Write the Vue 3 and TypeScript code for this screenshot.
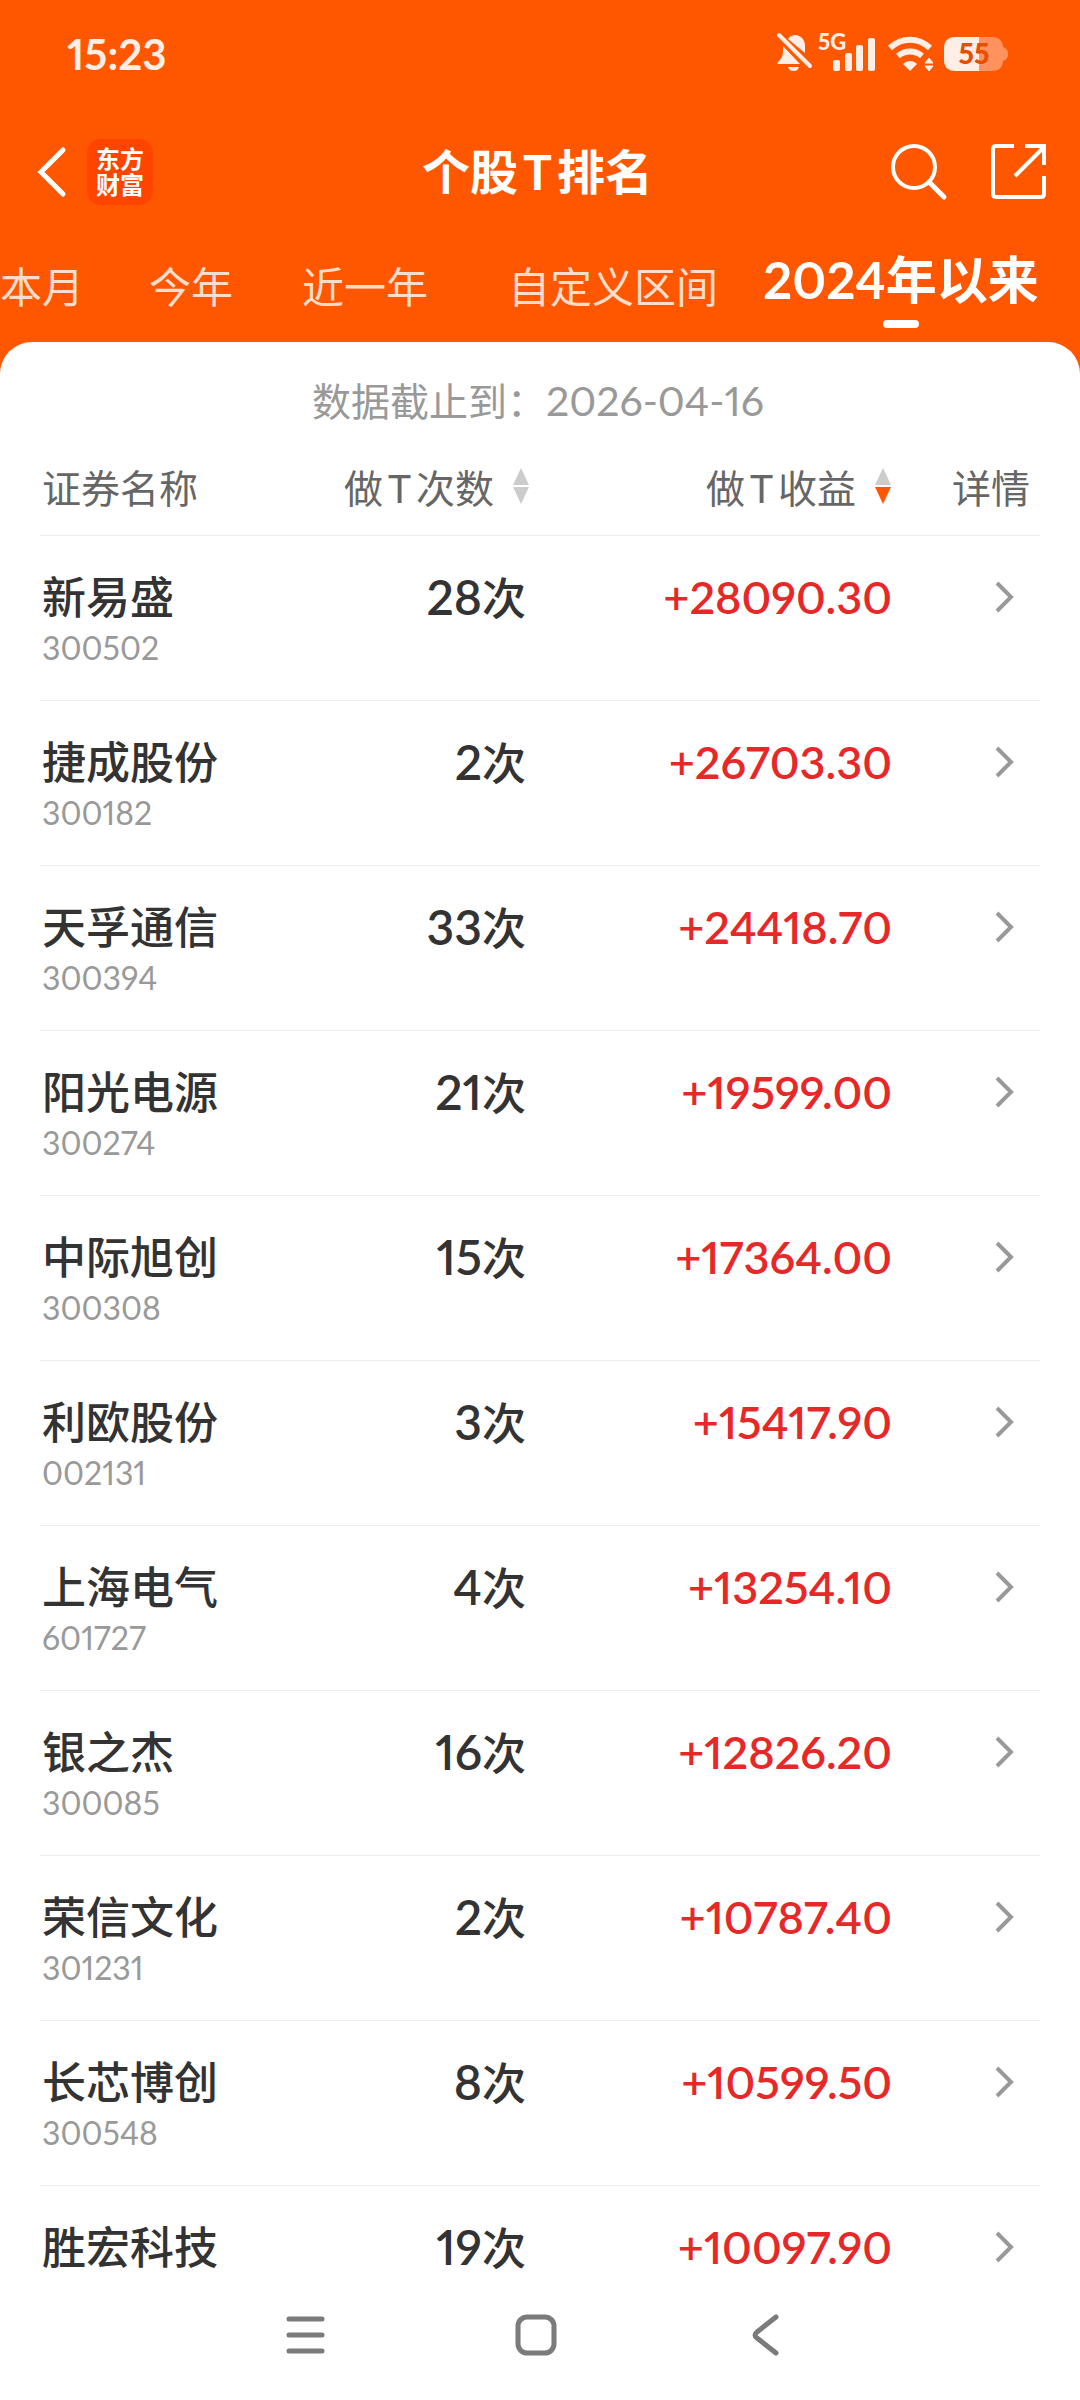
<script setup lang="ts">
import { ref } from 'vue'

interface Stock {
  name: string
  code: string
  count: number
  profit: string
}

const tabs: string[] = ['本月', '今年', '近一年', '自定义区间', '2024年以来']
const activeTab = ref<string>('2024年以来')

const stocks: Stock[] = [
  { name: '新易盛', code: '300502', count: 28, profit: '+28090.30' },
  { name: '捷成股份', code: '300182', count: 2, profit: '+26703.30' },
  { name: '天孚通信', code: '300394', count: 33, profit: '+24418.70' },
  { name: '阳光电源', code: '300274', count: 21, profit: '+19599.00' },
  { name: '中际旭创', code: '300308', count: 15, profit: '+17364.00' },
  { name: '利欧股份', code: '002131', count: 3, profit: '+15417.90' },
  { name: '上海电气', code: '601727', count: 4, profit: '+13254.10' },
  { name: '银之杰', code: '300085', count: 16, profit: '+12826.20' },
  { name: '荣信文化', code: '301231', count: 2, profit: '+10787.40' },
  { name: '长芯博创', code: '300548', count: 8, profit: '+10599.50' },
  { name: '胜宏科技', code: '', count: 19, profit: '+10097.90' },
]
</script>

<template>
  <div class="app">
    <header class="top">
      <div class="status">
        <time class="clock">15:23</time>
        <div class="indicators">
          <svg class="bell" width="36" height="40" viewBox="0 0 36 40" aria-hidden="true">
            <path d="M11 7C13 4 16 3 18 3C24 3 28 8 28 14V21Z" fill="currentColor" />
            <path d="M6 14L23 32H1C0 32 0 31 1 30C4 27 6 24 6 20Z" fill="currentColor" />
            <path d="M11 35H22C21 38 19 39 17 39C14 39 12 38 11 35Z" fill="currentColor" />
            <path d="M2 3L33 34" stroke="currentColor" stroke-width="4" stroke-linecap="round" />
          </svg>
          <svg class="signal" width="58" height="40" viewBox="0 0 58 40" aria-hidden="true">
            <text x="0" y="18" class="net">5G</text>
            <rect x="15" y="28" width="7" height="11" rx="2" fill="currentColor" />
            <rect x="27" y="21" width="7" height="18" rx="2" fill="currentColor" />
            <rect x="38" y="13" width="7" height="26" rx="2" fill="currentColor" />
            <rect x="50" y="6" width="7" height="33" rx="2" fill="currentColor" />
          </svg>
          <svg class="wifi" width="46" height="40" viewBox="0 0 46 40" aria-hidden="true">
            <path d="M2 16C14 5 30 5 42 16" fill="none" stroke="currentColor" stroke-width="6" />
            <path d="M10 24C17 18 27 18 34 24" fill="none" stroke="currentColor" stroke-width="6" />
            <path d="M15 32C19 28 25 28 29 32L22 39Z" fill="currentColor" />
            <path d="M37 31H45L41 26ZM37 34H45L41 39Z" fill="currentColor" stroke="currentColor" />
          </svg>
          <svg class="battery" width="64" height="34" viewBox="0 0 64 34" aria-hidden="true">
            <path d="M35 0H48C55 0 59 4 59 10C62 11 64 13 64 17C64 21 62 23 59 24C59 30 55 34 48 34H35Z" fill="#ff925d" />
            <path d="M35 0H11C4 0 0 4 0 11V23C0 30 4 34 11 34H35Z" fill="currentColor" />
            <text x="30" y="27" class="level">55</text>
          </svg>
        </div>
      </div>

      <div class="titlebar">
        <div class="side">
          <button class="icon-btn" type="button" aria-label="返回">
            <svg width="28" height="50" viewBox="0 0 28 50">
              <path d="M25 3L3 25L25 47" fill="none" stroke="#fff" stroke-width="5" stroke-linecap="round" />
            </svg>
          </button>
          <div class="logo"><span>东方</span><span>财富</span></div>
        </div>
        <h1>个股<span class="latin">T</span>排名</h1>
        <div class="side end">
          <button class="icon-btn" type="button" aria-label="搜索">
            <svg width="56" height="56" viewBox="0 0 56 56" fill="none" stroke="#fff" stroke-width="4">
              <circle cx="23" cy="23" r="21" />
              <path d="M38 38L53 53" stroke-width="5" stroke-linecap="round" />
            </svg>
          </button>
          <button class="icon-btn" type="button" aria-label="分享">
            <svg width="56" height="56" viewBox="0 0 56 56" fill="none" stroke="#fff" stroke-width="4">
              <path d="M23 2H5Q2 2 2 5V50Q2 53 5 53H50Q53 53 53 50V32" />
              <path d="M34 2H53V21" />
              <path d="M52 4L24 32" />
            </svg>
          </button>
        </div>
      </div>

      <nav class="tabs">
        <button
          v-for="tab in tabs"
          :key="tab"
          type="button"
          class="tab"
          :class="{ active: tab === activeTab }"
          @click="activeTab = tab"
        >{{ tab }}</button>
      </nav>
    </header>

    <main class="panel">
      <p class="asof">数据截止到：<span>2026-04-16</span></p>
      <table>
        <colgroup>
          <col class="c-name" />
          <col class="c-count" />
          <col class="c-profit" />
          <col class="c-detail" />
        </colgroup>
        <thead>
          <tr>
            <th scope="col">证券名称</th>
            <th scope="col" class="right">
              <button type="button" class="sort">
                <span>做<span class="latin">T</span>次数</span>
                <svg width="18" height="36" viewBox="0 0 18 36" aria-hidden="true">
                  <path d="M9 0L17 17H1Z" fill="#ccc" />
                  <path d="M9 36L17 19H1Z" fill="#ccc" />
                </svg>
              </button>
            </th>
            <th scope="col" class="right" aria-sort="descending">
              <button type="button" class="sort">
                <span>做<span class="latin">T</span>收益</span>
                <svg width="18" height="36" viewBox="0 0 18 36" aria-hidden="true">
                  <path d="M9 0L17 17H1Z" fill="#ccc" />
                  <path d="M9 36L17 19H1Z" fill="#ff5700" />
                </svg>
              </button>
            </th>
            <th scope="col" class="right detail-head">详情</th>
          </tr>
        </thead>
        <tbody>
          <tr v-for="s in stocks" :key="s.name">
            <td>
              <div class="name">{{ s.name }}</div>
              <div class="code">{{ s.code }}</div>
            </td>
            <td class="right count"><span>{{ s.count }}</span>次</td>
            <td class="right profit">{{ s.profit }}</td>
            <td class="right detail">
              <a href="#" :aria-label="s.name + '详情'">
                <svg width="20" height="32" viewBox="0 0 20 32">
                  <path d="M2 2L16 16L2 30" fill="none" stroke="#999" stroke-width="4" />
                </svg>
              </a>
            </td>
          </tr>
        </tbody>
      </table>
    </main>

    <nav class="sysnav">
      <button class="icon-btn" type="button" aria-label="最近任务">
        <svg width="42" height="42" viewBox="0 0 42 42">
          <path d="M4 5H37M4 21H37M4 37H37" stroke="#7b7b7b" stroke-width="5" stroke-linecap="round" />
        </svg>
      </button>
      <button class="icon-btn" type="button" aria-label="主屏幕">
        <svg width="42" height="42" viewBox="0 0 42 42">
          <rect x="3" y="3" width="36" height="36" rx="9" fill="none" stroke="#7b7b7b" stroke-width="5" />
        </svg>
      </button>
      <button class="icon-btn" type="button" aria-label="返回上一页">
        <svg width="42" height="42" viewBox="0 0 42 42">
          <path d="M31 3L12 18Q8 21 12 24L31 39" fill="none" stroke="#7b7b7b" stroke-width="5" stroke-linecap="round" />
        </svg>
      </button>
    </nav>
  </div>
</template>

<style>
body {
  margin: 0;
  background: #fff;
}
</style>

<style scoped>
.app {
  display: flex;
  flex-direction: column;
  height: 100vh;
  background: #ff5700;
  color: #333;
  font-family: Lato, "Noto Sans CJK SC", sans-serif;
  font-variant-numeric: proportional-nums;
}
button {
  margin: 0;
  padding: 0;
  border: 0;
  background: none;
  color: inherit;
  font: inherit;
  font-variant-numeric: inherit;
  cursor: pointer;
}
svg {
  display: block;
  overflow: visible;
}
.status {
  display: flex;
  align-items: center;
  justify-content: space-between;
  height: 108px;
  padding: 0 72px 0 67px;
  color: #ffeee6;
}
.clock {
  font-size: 42px;
  font-weight: 700;
}
.indicators {
  display: flex;
  align-items: center;
}
.signal {
  margin-left: 5px;
}
.wifi {
  margin-left: 12px;
}
.battery {
  margin-left: 10px;
}
.bell,
.signal,
.wifi {
  margin-bottom: 4px;
}
.net {
  fill: currentColor;
  font-size: 22px;
  font-weight: 900;
}
.level {
  fill: #e64e00;
  font-size: 28px;
  font-weight: 900;
  text-anchor: middle;
}
.titlebar {
  display: flex;
  align-items: center;
  justify-content: space-between;
  height: 128px;
  padding: 0 33px 0 38px;
}
.side {
  display: flex;
  align-items: center;
  gap: 21px;
  flex: 1;
}
.side.end {
  justify-content: flex-end;
  gap: 44px;
}
.logo {
  display: flex;
  flex-direction: column;
  align-items: center;
  justify-content: center;
  width: 66px;
  height: 66px;
  border-radius: 14px;
  background: #ff4400;
  color: #fff;
  font-size: 24px;
  font-weight: 700;
  line-height: 26px;
}
h1 {
  margin: 0;
  padding-right: 10px;
  color: #fff;
  font-size: 48px;
  font-weight: 700;
  line-height: 64px;
}
.latin {
  margin: 0 5px;
}
.tabs {
  display: grid;
  grid-template-columns: 149fr 153fr 206fr 255fr 317fr;
  align-items: center;
  box-sizing: border-box;
  height: 106px;
  padding-bottom: 4px;
}
.tab {
  position: relative;
  justify-self: start;
  color: #ffddcc;
  font-size: 42px;
  line-height: 64px;
  white-space: nowrap;
}
.tab.active {
  padding-bottom: 14px;
  color: #fff;
  font-size: 51px;
  font-weight: 700;
}
.tab.active::after {
  content: "";
  position: absolute;
  bottom: -2px;
  left: 50%;
  width: 36px;
  height: 8px;
  margin-left: -18px;
  border-radius: 4px;
  background: #fff;
}
.panel {
  flex: 1;
  min-height: 0;
  overflow-y: auto;
  scrollbar-width: none;
  padding: 0 40px;
  border-radius: 32px 32px 0 0;
  background: #fff;
}
.asof {
  margin: 0;
  padding: 31px 4px 16px 0;
  color: #999;
  font-size: 39px;
  line-height: 56px;
  text-align: center;
}
.asof span {
  font-size: 41px;
}
table {
  width: 100%;
  table-layout: fixed;
  border-spacing: 0;
}
.c-name {
  width: 25%;
}
.c-count {
  width: 24%;
}
.c-detail {
  width: 148px;
}
th {
  height: 82px;
  padding: 0 0 8px;
  border-bottom: 1px solid #eee;
  color: #666;
  font-size: 39px;
  font-weight: 400;
  text-align: left;
}
td {
  padding: 33px 0 29px;
  border-bottom: 1px solid #eee;
  font-size: 44px;
  line-height: 56px;
  vertical-align: top;
}
th:first-child,
td:first-child {
  padding-left: 2px;
}
.right {
  text-align: right;
}
.sort {
  display: inline-flex;
  align-items: center;
  gap: 18px;
}
.detail-head {
  padding-right: 10px;
}
.name,
.count,
.profit {
  font-weight: 500;
}
.code {
  height: 46px;
  color: #999;
  font-size: 32px;
  line-height: 46px;
}
.count {
  padding-right: 4px;
}
.count span,
.profit {
  font-weight: 600;
}
.count span {
  font-size: 48px;
}
.profit {
  color: #e62828;
  font-size: 45px;
}
.detail {
  padding-right: 25px;
}
.detail a {
  display: inline-flex;
  align-items: center;
  height: 56px;
  vertical-align: top;
}
.sysnav {
  display: flex;
  align-items: center;
  justify-content: center;
  gap: 188px;
  box-sizing: border-box;
  height: 120px;
  padding: 0 9px 10px 0;
  background: #fff;
}
</style>
